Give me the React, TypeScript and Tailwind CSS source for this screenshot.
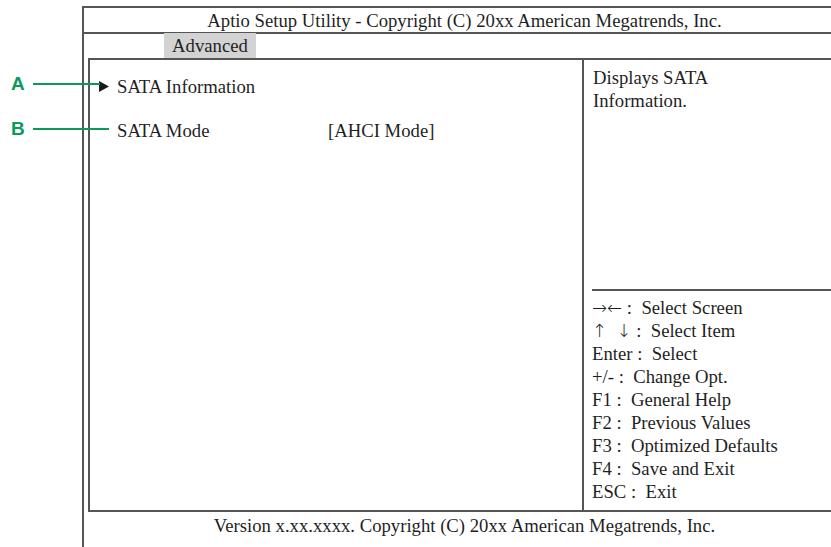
import { ReactNode } from 'react';

const Arrow = ({ children }: { children: ReactNode }) => (
  <span className="font-['DejaVu_Sans',sans-serif] text-[18px] font-extralight">{children}</span>
);

const helpItems: ReactNode[] = [
  <>
    <Arrow>→←</Arrow>
    {' :  Select Screen'}
  </>,
  <>
    <Arrow>↑</Arrow>
    {'  '}
    <Arrow>↓</Arrow>
    {' :  Select Item'}
  </>,
  'Enter :  Select',
  '+/- :  Change Opt.',
  'F1 :  General Help',
  'F2 :  Previous Values',
  'F3 :  Optimized Defaults',
  'F4 :  Save and Exit',
  'ESC :  Exit',
];

const Callout = ({ label, top, width }: { label: string; top: number; width: number }) => (
  <div className="absolute left-0 z-10 flex items-center" style={{ top }}>
    <span className="w-[33px] pl-[11px] font-['Liberation_Sans',Arial,sans-serif] text-[19px] leading-[20px] font-bold text-[#0a9a5a]">
      {label}
    </span>
    <div className="h-[2px] bg-[#0a9a5a]" style={{ width }} />
  </div>
);

const Row = ({ arrow, children }: { arrow?: boolean; children: ReactNode }) => (
  <div className="flex h-[44px] items-start">
    <div className="flex h-[23px] w-[27px] items-center pl-[9px]">
      {arrow && (
        <svg width="10" height="11" viewBox="0 0 10 11">
          <path d="M0 0 L10 5.5 L0 11 Z" fill="#1a1a1a" />
        </svg>
      )}
    </div>
    {children}
  </div>
);

const App = () => {
  return (
    <div className="relative h-[547px] w-[831px] overflow-hidden bg-white font-['Liberation_Serif','Times_New_Roman',serif] text-[18.7px] leading-[23px] text-[#1f1f1f]">
      {/* Callouts */}
      <Callout label="A" top={74} width={67} />
      <Callout label="B" top={119} width={76} />

      {/* Frame */}
      <div className="ml-[82px] mt-[6px] h-[560px] w-[763px] border-l-2 border-t-2 border-[#555]">
        <div className="flex h-[26px] items-center justify-center border-b-2 border-[#555]">
          Aptio Setup Utility - Copyright (C) 20xx American Megatrends, Inc.
        </div>
        <div className="flex h-[24px] pl-[80px]">
          <div className="-mt-[1px] flex h-[25px] w-[92px] items-center justify-center bg-[#d3d3d3]">
            Advanced
          </div>
        </div>

        {/* Main box */}
        <div className="ml-[4px] flex h-[454px] border-2 border-r-0 border-[#555]">
          <div className="w-[494px] border-r-2 border-[#555] pt-[15px]">
            <Row arrow>
              <span>SATA Information</span>
            </Row>
            <Row>
              <span className="w-[211px]">SATA Mode</span>
              <span>[AHCI Mode]</span>
            </Row>
          </div>
          <div className="flex flex-1 flex-col">
            <div className="flex-1 pl-[9px] pt-[6px]">
              <p>Displays SATA</p>
              <p>Information.</p>
            </div>
            <div className="ml-[8px] border-t-2 border-[#555] pt-[5px] pb-[7px]">
              {helpItems.map((item, i) => (
                <p key={i} className="h-[23px] whitespace-pre">
                  {item}
                </p>
              ))}
            </div>
          </div>
        </div>

        <div className="flex h-[26px] items-center justify-center">
          Version x.xx.xxxx. Copyright (C) 20xx American Megatrends, Inc.
        </div>
      </div>
    </div>
  );
};

export default App;
